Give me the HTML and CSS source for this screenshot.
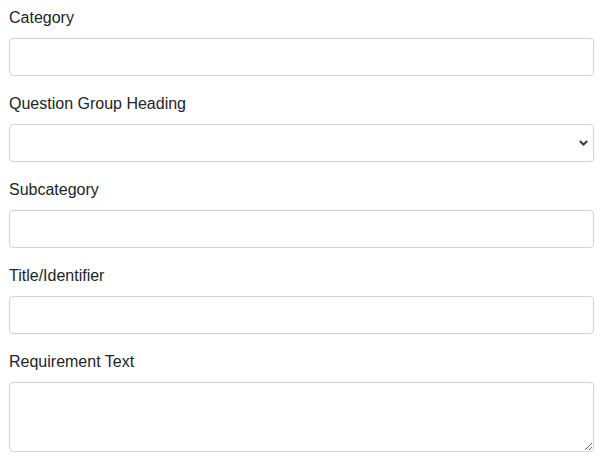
FILE: index.html
```html
<!DOCTYPE html>
<html lang="en">
<head>
<meta charset="utf-8">
<title>Form</title>
<link rel="stylesheet" href="styles.css">
</head>
<body>
<form class="form">
  <div class="field">
    <label class="label" for="category">Category</label>
    <input class="control" id="category" type="text">
  </div>
  <div class="field">
    <label class="label" for="group">Question Group Heading</label>
    <div class="select-wrap">
      <select class="control select" id="group"><option></option></select>
      <svg class="chevron" width="9" height="6" viewBox="0 0 9 6" aria-hidden="true"><path d="M0.8 1 L4.5 4.5 L8.2 1" fill="none" stroke="#3a3a3a" stroke-width="2"/></svg>
    </div>
  </div>
  <div class="field">
    <label class="label" for="subcategory">Subcategory</label>
    <input class="control" id="subcategory" type="text">
  </div>
  <div class="field">
    <label class="label" for="title">Title/Identifier</label>
    <input class="control" id="title" type="text">
  </div>
  <div class="field">
    <label class="label" for="req">Requirement Text</label>
    <textarea class="control textarea" id="req"></textarea>
  </div>
</form>
</body>
</html>
```

FILE: styles.css
```css
html, body {
  margin: 0;
  background: #fff;
}
body {
  padding: 6px 8px 0 9px;
  font-family: "Liberation Sans", Arial, sans-serif;
  font-size: 16px;
  line-height: 24px;
  color: #212529;
}
.form {
  display: flex;
  flex-direction: column;
  gap: 16px;
}
.field {
  display: flex;
  flex-direction: column;
}
.label {
  display: block;
  margin-bottom: 8px;
}
.control {
  display: block;
  box-sizing: border-box;
  width: 100%;
  height: 38px;
  margin: 0;
  padding: 6px 12px;
  font: inherit;
  color: #212529;
  background: #fff;
  border: 1px solid #ced4da;
  border-radius: 4px;
}
.select-wrap {
  position: relative;
}
.select {
  appearance: none;
  -webkit-appearance: none;
}
.chevron {
  position: absolute;
  right: 6px;
  top: 16px;
  pointer-events: none;
}
.textarea {
  height: 70px;
  resize: vertical;
}
```
